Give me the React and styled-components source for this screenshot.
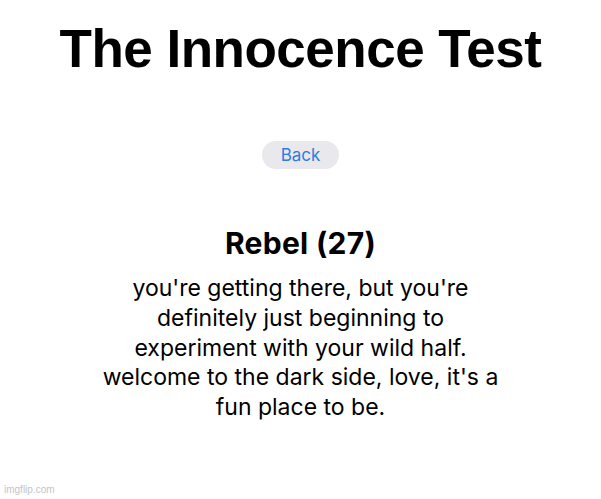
import styled, { createGlobalStyle } from "styled-components";

const GlobalStyle = createGlobalStyle`
  html, body {
    margin: 0;
    padding: 0;
    background: #ffffff;
  }

  body {
    font-family: Inter, "Liberation Sans", Arial, sans-serif;
    -webkit-font-smoothing: antialiased;
  }
`;

const Page = styled.div`
  position: relative;
  width: 601px;
  height: 499px;
  display: flex;
  flex-direction: column;
  align-items: center;
  background: #fff;
  color: #000;
  overflow: hidden;
`;

const Title = styled.h1`
  margin: 21px 0 0;
  font-family: "Liberation Sans", Arial, sans-serif;
  font-size: 53px;
  font-weight: 700;
  line-height: 56px;
  letter-spacing: -0.5px;
`;

const BackButton = styled.button`
  margin-top: 64px;
  height: 28px;
  width: 77px;
  border: none;
  border-radius: 14px;
  background: #e9e9ed;
  color: #2d7ce0;
  font-family: Inter, "Liberation Sans", Arial, sans-serif;
  font-size: 17px;
  padding: 0;
  cursor: pointer;
`;

const ResultName = styled.h2`
  margin: 57px 0 0;
  font-size: 30px;
  font-weight: 700;
  line-height: 34px;
  letter-spacing: 0.3px;
`;

const Description = styled.p`
  margin: 14px 0 0;
  font-size: 23px;
  line-height: 29.8px;
  text-align: center;
`;

const Watermark = styled.span`
  position: absolute;
  left: 4px;
  bottom: 4px;
  font-family: "Liberation Sans", Arial, sans-serif;
  font-size: 10px;
  color: #c4c4c4;
`;

export default function App() {
  return (
    <>
      <GlobalStyle />
      <Page>
        <Title>The Innocence Test</Title>
        <BackButton>Back</BackButton>
        <ResultName>Rebel (27)</ResultName>
        <Description>
          you're getting there, but you're
          <br />
          definitely just beginning to
          <br />
          experiment with your wild half.
          <br />
          welcome to the dark side, love, it's a
          <br />
          fun place to be.
        </Description>
        <Watermark>imgflip.com</Watermark>
      </Page>
    </>
  );
}
